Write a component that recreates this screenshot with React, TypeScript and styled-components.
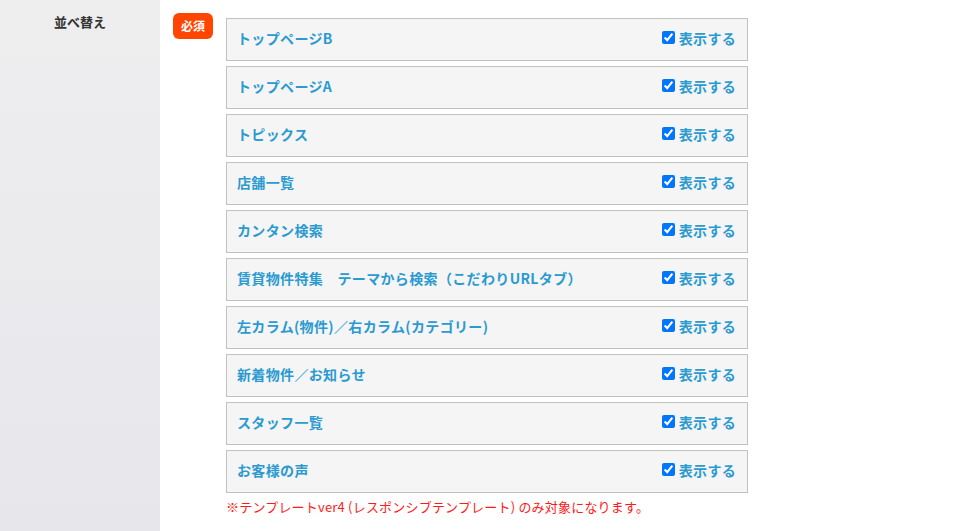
import React from "react";
import styled, { createGlobalStyle } from "styled-components";

const Global = createGlobalStyle`
  html, body { margin: 0; padding: 0; background: #fff; }
  body { font-family: "Noto Sans CJK JP", "Noto Sans", sans-serif; }
`;

const Page = styled.div`
  display: flex;
  min-height: 531px;
`;

const Side = styled.div`
  width: 160px;
  flex: 0 0 160px;
  background: linear-gradient(#eeeeef, #e7e6eb);
  display: flex;
  justify-content: center;
  padding-top: 12px;
  box-sizing: border-box;
`;

const SideLabel = styled.div`
  font-size: 13px;
  font-weight: bold;
  color: #333;
  line-height: 20px;
  height: 20px;
`;

const Main = styled.div`
  display: flex;
  align-items: flex-start;
  gap: 13px;
  padding: 13px 0 0 13px;
`;

const Badge = styled.div`
  width: 40px;
  height: 26px;
  border-radius: 6px;
  background: #ff4500;
  color: #fff;
  font-size: 12px;
  font-weight: bold;
  display: flex;
  align-items: center;
  justify-content: center;
  padding-bottom: 1px;
  box-sizing: border-box;
`;

const List = styled.div`
  display: flex;
  flex-direction: column;
  gap: 5px;
  margin-top: 5px;
  width: 522px;
`;

const Row = styled.div`
  box-sizing: border-box;
  height: 43px;
  border: 1px solid #c2c2c2;
  background: #f5f5f5;
  display: flex;
  align-items: center;
  justify-content: space-between;
  padding: 0 11px 3px 10px;
  color: #2a9ad0;
  font-size: 14px;
  font-weight: bold;
`;

const Title = styled.span`
  white-space: pre;
  letter-spacing: 0.35px;
`;

const Toggle = styled.label`
  display: flex;
  align-items: center;
  gap: 4px;
  cursor: pointer;
  letter-spacing: 0.3px;
`;

const Check = styled.input`
  width: 13px;
  height: 13px;
  margin: 0 0 2px 0;
  accent-color: #0075ff;
`;

const Note = styled.div`
  margin-top: 5px;
  color: #ff1a1a;
  font-size: 13px;
  line-height: 18px;
  letter-spacing: 0.2px;
`;

const items = [
  "トップページB",
  "トップページA",
  "トピックス",
  "店舗一覧",
  "カンタン検索",
  "賃貸物件特集　テーマから検索（こだわりURLタブ）",
  "左カラム(物件)／右カラム(カテゴリー)",
  "新着物件／お知らせ",
  "スタッフ一覧",
  "お客様の声",
];

export default function App() {
  return (
    <>
      <Global />
      <Page>
        <Side>
          <SideLabel>並べ替え</SideLabel>
        </Side>
        <Main>
          <Badge>必須</Badge>
          <div>
            <List>
              {items.map((t) => (
                <Row key={t}>
                  <Title>{t}</Title>
                  <Toggle>
                    <Check type="checkbox" defaultChecked />
                    表示する
                  </Toggle>
                </Row>
              ))}
            </List>
            <Note>※テンプレートver4 (レスポンシブテンプレート) のみ対象になります。</Note>
          </div>
        </Main>
      </Page>
    </>
  );
}
